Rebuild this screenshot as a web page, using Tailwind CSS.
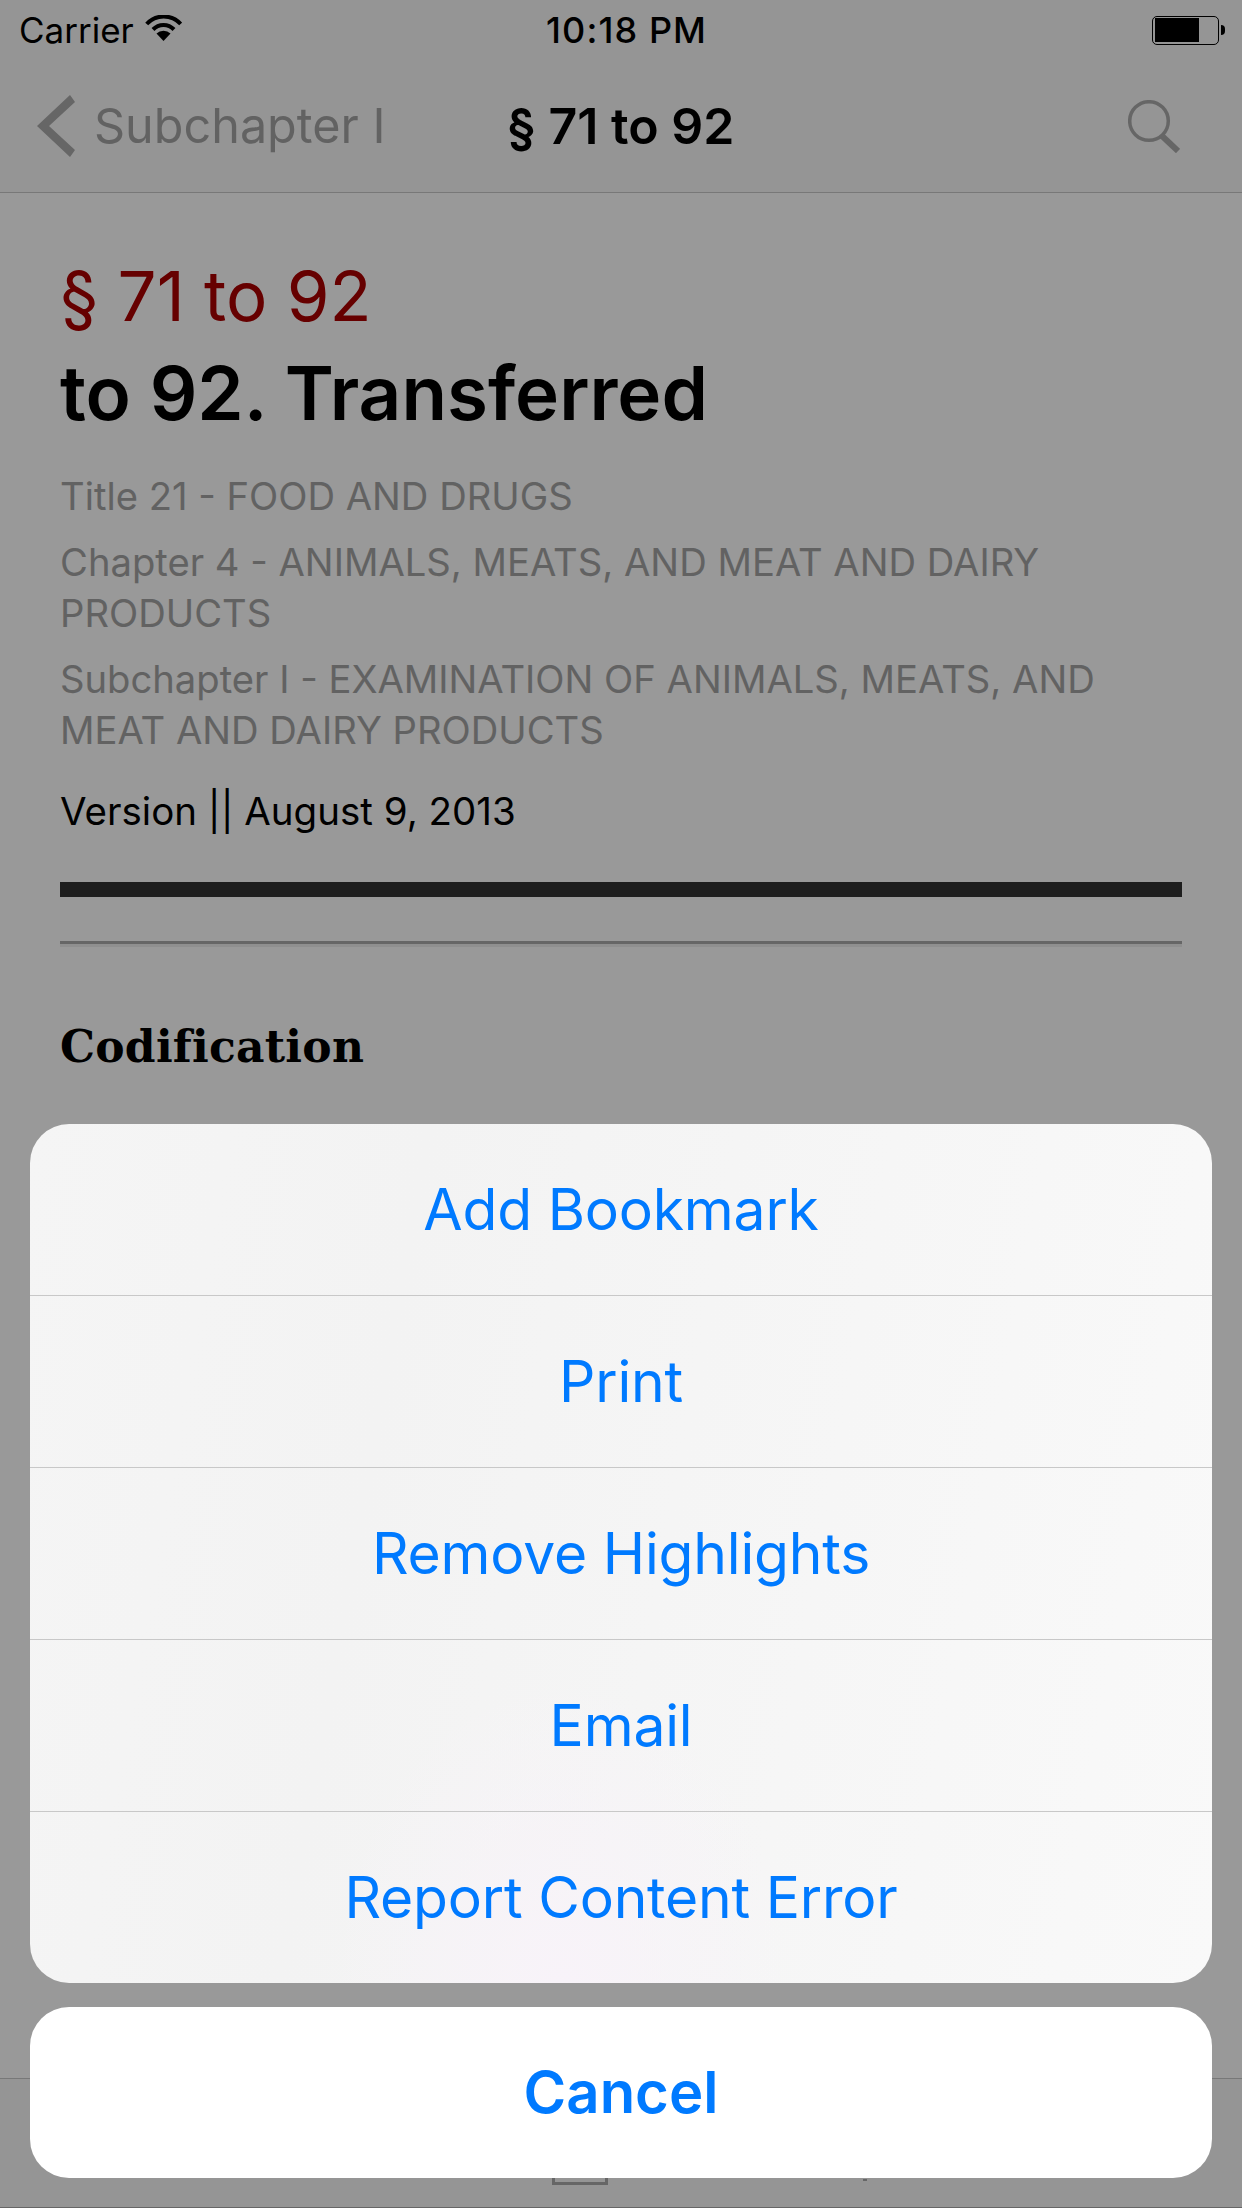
<!DOCTYPE html>
<html lang="en">
<head>
    <meta charset="UTF-8">
    <meta name="viewport" content="width=device-width, initial-scale=1.0">
    <script src="https://cdn.jsdelivr.net/npm/@tailwindcss/browser@4"></script>
    <title>§ 71 to 92</title>
</head>
<body class="bg-white font-['Inter','Noto_Sans',sans-serif]">

    <div class="relative w-[1242px] h-[2208px] overflow-hidden flex flex-col">
        <!-- Status bar + nav -->
        <header class="bg-[#f8f8f8] border-b border-[#c8c8c8]">
            <div class="h-[60px] flex items-center pl-[19px] pr-[17px] text-black">
                <div class="w-[527px] flex items-center gap-[11px]">
                    <span class="text-[35px] leading-none">Carrier</span>
                    <svg width="37" height="26" viewBox="0 0 37 26" class="mb-[5px]">
                        <path d="M1.7 9 A23 23 0 0 1 35.7 9" fill="none" stroke="#000" stroke-width="4"/>
                        <path d="M8 14.5 A14.5 14.5 0 0 1 29 14.5" fill="none" stroke="#000" stroke-width="4"/>
                        <path d="M18.5 26 L11.5 18.5 A10 10 0 0 1 25.5 18.5 Z" fill="#000"/>
                    </svg>
                </div>
                <span class="text-[36px] leading-none font-medium tracking-[1.1px]">10:18 PM</span>
                <div class="ml-auto flex items-center">
                    <div class="w-[67px] h-[29px] border-[1.5px] border-black rounded-[5px] p-[1.5px]"><div class="w-[44px] h-full bg-black"></div></div>
                    <div class="w-[4px] h-[10px] ml-[2px] bg-black rounded-r-full"></div>
                </div>
            </div>
            <div class="h-[132px] flex items-center pl-[37px] pr-[62px]">
                <div class="w-[470px] flex items-center gap-[19px]">
                    <svg width="38" height="62" viewBox="0 0 38 62">
                        <path d="M0 31 L33 0 L38 7 L12 31 L38 55 L33 62 Z" fill="#aaaaaa"/>
                    </svg>
                    <span class="text-[48.5px] leading-none text-[#a4a4a4]">Subchapter I</span>
                </div>
                <span class="text-[50px] font-semibold text-black leading-none">§ 71 to 92</span>
                <svg width="52" height="53" viewBox="0 0 52 53" class="ml-auto">
                    <circle cx="21" cy="21" r="19.3" fill="none" stroke="#aaaaaa" stroke-width="3.5"/>
                    <path d="M33 35 L50 51" fill="none" stroke="#aaaaaa" stroke-width="6"/>
                </svg>
            </div>
        </header>

        <!-- Document -->
        <main class="flex-1 px-[60px] pt-[63px] flex flex-col">
            <h2 class="text-[69px] leading-[80px] text-[#aa0000]">§ 71 to 92</h2>
            <h1 class="text-[74.5px] leading-[88px] font-semibold text-black mt-[13px]">to 92. Transferred</h1>
            <p class="text-[38.2px] leading-[51px] text-[#a4a4a4] mt-[34px]">Title 21 - FOOD AND DRUGS</p>
            <p class="text-[38.2px] leading-[51px] text-[#a4a4a4] mt-[15px]">Chapter 4 - ANIMALS, MEATS, AND MEAT AND DAIRY PRODUCTS</p>
            <p class="text-[38.2px] leading-[51px] text-[#a4a4a4] mt-[15px]">Subchapter I - EXAMINATION OF ANIMALS, MEATS, AND MEAT AND DAIRY PRODUCTS</p>
            <p class="text-[38.5px] leading-[51px] text-black mt-[30px] [font-feature-settings:'calt'_0]">Version || August 9, 2013</p>
            <div class="h-[15px] bg-[#333333] mt-[45px]"></div>
            <div class="h-[6px] bg-[#aaaaaa] border-b-[3px] border-[#eeeeee] mt-[44px]"></div>
            <h3 class="font-['DejaVu_Serif',serif] font-bold text-[44px] leading-[56px] tracking-[0.25px] text-black mt-[72px]">Codification</h3>
        </main>

        <!-- Bottom toolbar, mostly hidden by the sheet -->
        <footer class="h-[130px] bg-[#f8f8f8] border-t border-b border-t-[#c8c8c8] border-b-[#aaaaaa] relative">
            <div class="absolute left-[552px] top-[40px] w-[56px] h-[66px] border-[3px] border-[#aaaaaa]"></div>
            <div class="absolute left-[863px] top-[100px] w-[4px] h-[2px] bg-[#aaaaaa]"></div>
        </footer>

        <!-- Dim overlay -->
        <div class="absolute inset-0 bg-black/40"></div>

        <!-- Action sheet -->
        <div class="absolute left-[30px] right-[30px] bottom-[30px] flex flex-col gap-[24px] text-[#007aff] text-[57px] tracking-[-0.2px]">
            <div class="rounded-[39px] overflow-hidden bg-[radial-gradient(ellipse_at_45%_100%,#f8f3f9,transparent_25%),linear-gradient(100deg,#f5f5f5,#f3f3f3_30%,#f9f9f9)] flex flex-col">
                <div class="h-[172px] border-b-[1.5px] border-[#c8c8c8] flex items-center justify-center">Add Bookmark</div>
                <div class="h-[172px] border-b-[1.5px] border-[#c8c8c8] flex items-center justify-center">Print</div>
                <div class="h-[172px] border-b-[1.5px] border-[#c8c8c8] flex items-center justify-center">Remove Highlights</div>
                <div class="h-[172px] border-b-[1.5px] border-[#c8c8c8] flex items-center justify-center">Email</div>
                <div class="h-[171px] flex items-center justify-center">Report Content Error</div>
            </div>
            <div class="h-[171px] rounded-[39px] bg-white flex items-center justify-center font-semibold text-[58px] tracking-normal">Cancel</div>
        </div>
    </div>

</body>
</html>
